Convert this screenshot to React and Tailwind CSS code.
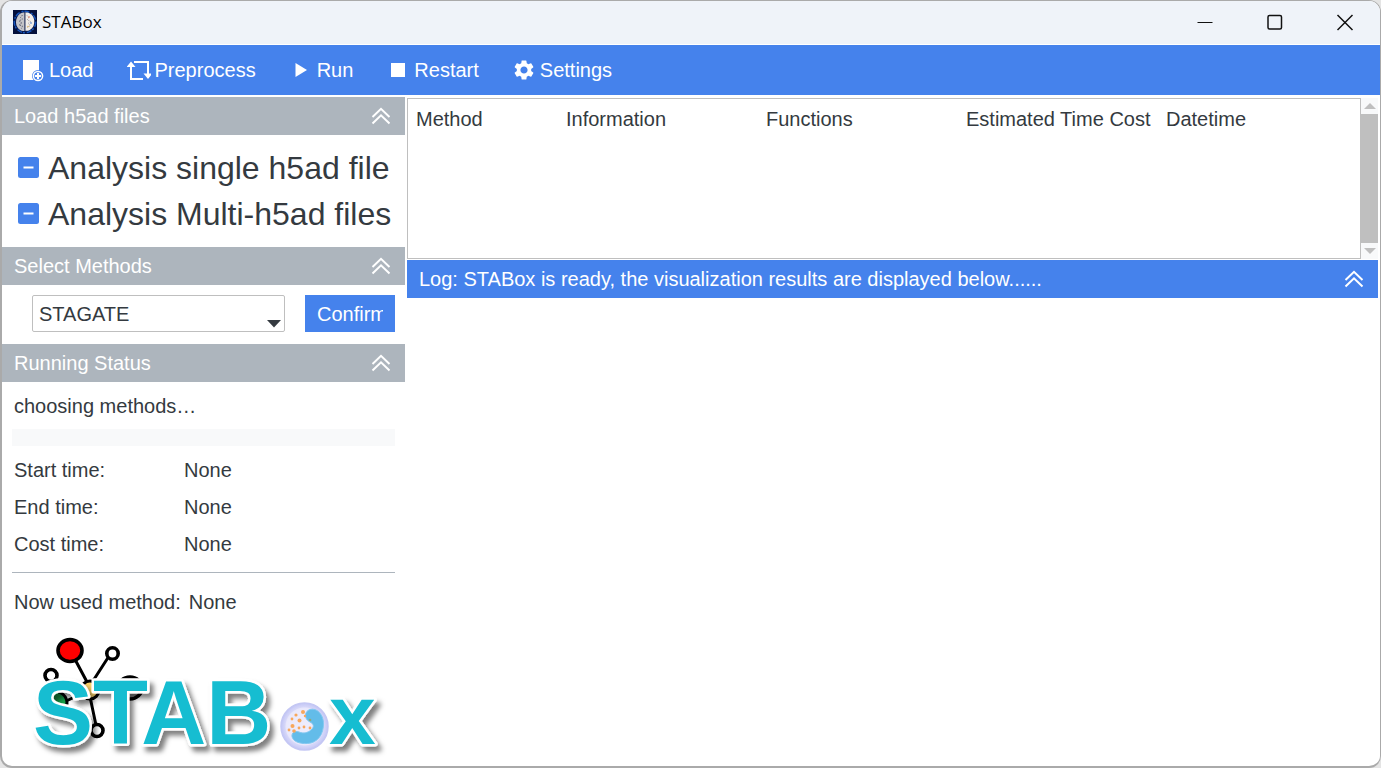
import { useState } from "react";
import { MdSettings } from "react-icons/md";

function AppIcon() {
  return (
    <svg className="size-6" viewBox="0 0 24 24" aria-hidden="true">
      <rect width="24" height="24" fill="#04103c" />
      <circle cx="12" cy="12" r="10.8" fill="#071a52" stroke="#1656bf" strokeWidth="1.400" strokeDasharray="5 2 2 1" />
      <path d="M11.500 2.600C8 2 5.400 4.600 4.200 7.200 2.400 10.400 2.600 14.800 4.600 17.400c1.600 2.600 4.400 4.200 6.900 3.400z" fill="#c4c4c8" />
      <path d="M12.300 2.600c3.700-.8 7.100 1.800 8.300 5.200 1.400 3.600.8 7.800-1.600 10.400-1.900 2-4.500 3-6.700 2.400z" fill="#f1ede9" />
      <path d="M9.500 5l-2 2.500 2 1.500-3.500 2 3 2-3 2 3.500 1-1 2.500" fill="none" stroke="#66677a" strokeWidth="1" strokeDasharray="1.500 1" />
      <path d="M14 5.500l2 2.500-2 2 4 1.500-3 2 2.500 2-3 2" fill="none" stroke="#8c8794" strokeWidth=".9" strokeDasharray="1 1.500" />
      <path d="M11.900 3v17" stroke="#4a5070" strokeWidth=".7" />
      <circle cx="16" cy="7" r=".8" fill="#df6c4a" />
      <circle cx="18" cy="13" r=".8" fill="#3b74c9" />
      <circle cx="15" cy="16.500" r=".7" fill="#d7a23f" />
    </svg>
  );
}

function LoadIcon() {
  return (
    <svg className="size-6" viewBox="0 0 24 24" aria-hidden="true">
      <path d="M2 2h16v20H2z" fill="#fff" />
      <circle cx="17" cy="18" r="6" fill="#4582ec" />
      <circle cx="17" cy="18" r="4.600" fill="#4582ec" stroke="#fff" strokeWidth="1.500" />
      <path d="M17 15v6M14 18h6" stroke="#fff" strokeWidth="2" />
    </svg>
  );
}

function PreprocessIcon() {
  return (
    <svg className="size-6" viewBox="0 0 24 24" aria-hidden="true">
      <path d="M4 6v15h12M7 4h14v14" fill="none" stroke="#fff" strokeWidth="2" />
      <path d="M-.5 9L4 3.500 8.500 9zM16.500 15.500L21 21l4.500-5.500z" fill="#fff" />
    </svg>
  );
}

function RunIcon() {
  return (
    <svg className="size-6" viewBox="0 0 24 24" aria-hidden="true">
      <path d="M6.500 5v14L18 12z" fill="#fff" />
    </svg>
  );
}

function StopIcon() {
  return (
    <svg className="size-6" viewBox="0 0 24 24" aria-hidden="true">
      <path d="M5 5h14v14H5z" fill="#fff" />
    </svg>
  );
}

function Chevrons({ flipped }) {
  return (
    <svg className={flipped ? "size-5 rotate-180" : "size-5"} viewBox="0 0 20 20" fill="none" stroke="#fff" strokeWidth="2" aria-hidden="true">
      <path d="M1.500 11L10 2.800l8.500 8.200M1.500 17.500L10 9.300l8.500 8.200" />
    </svg>
  );
}

function PanelHeader({ title, tone, open, onToggle }) {
  return (
    <div className={`flex h-[38px] items-center justify-between pl-3 pr-3.5 text-white ${tone}`}>
      <h2>{title}</h2>
      <button type="button" aria-label={`Toggle ${title}`} aria-expanded={open} onClick={onToggle}>
        <Chevrons flipped={!open} />
      </button>
    </div>
  );
}

function Panel({ title, tone = "bg-[#adb5bd]", children }) {
  const [open, setOpen] = useState(true);
  return (
    <section>
      <PanelHeader title={title} tone={tone} open={open} onToggle={() => setOpen(!open)} />
      {open && children}
    </section>
  );
}

function TreeItem({ label }) {
  return (
    <li>
      <button type="button" className="flex h-[46px] items-center gap-2 text-[32px] whitespace-nowrap">
        <svg className="size-[22px]" viewBox="0 0 22 22" aria-hidden="true">
          <rect width="21" height="21" rx="2.500" fill="#4582ec" />
          <path d="M5.500 10.500h10" stroke="#fff" strokeWidth="1.800" />
        </svg>
        {label}
      </button>
    </li>
  );
}

function Logo() {
  return (
    <svg className="h-[132px] w-[380px]" viewBox="0 0 380 132" role="img" aria-label="STABox">
      <defs>
        <filter id="shade" x="-10%" y="-10%" width="120%" height="130%">
          <feDropShadow dx="4" dy="5" stdDeviation="2.500" floodColor="#000" floodOpacity=".5" />
        </filter>
        <radialGradient id="cell">
          <stop offset="0" stopColor="#eceafc" />
          <stop offset=".72" stopColor="#e2e2fb" />
          <stop offset="1" stopColor="#c3c6f5" />
        </radialGradient>
      </defs>
      <g stroke="#000" strokeWidth="3" fill="#fff">
        <path d="M58 20L75 52M99 23L79 54M77 62L85 100M77 60L48 74" />
        <ellipse cx="58" cy="20.500" rx="12" ry="11" fill="#f00" strokeWidth="3.600" />
        <circle cx="100.500" cy="23.500" r="5.700" strokeWidth="3.600" />
        <circle cx="39" cy="45.500" r="6" strokeWidth="3.600" />
        <circle cx="85" cy="100.500" r="6" strokeWidth="3.600" />
        <ellipse cx="118" cy="58" rx="12" ry="11" fill="#999" strokeWidth="3.600" />
        <ellipse cx="42" cy="73" rx="13" ry="12" fill="#16a34a" />
        <circle cx="78" cy="60" r="9" fill="#fcd36c" />
      </g>
      <g fontFamily="'Liberation Sans', Arial, sans-serif" fontWeight="700" fill="#17bdd1" stroke="#fff" strokeWidth="5" strokeLinejoin="round" paintOrder="stroke" filter="url(#shade)">
        <text x="21" y="114" fontSize="90">STAB</text>
        <text x="317" y="114" fontSize="84">x</text>
      </g>
      <circle cx="292.500" cy="96.500" r="23.500" fill="url(#cell)" stroke="#c4c7f4" strokeWidth="1.500" />
      <circle cx="292.500" cy="96.500" r="19" fill="#f0effd" opacity=".6" />
      <path d="M298 79.500c7-2 13 5 13.500 13 .5 12-6 20.500-16 21-8 .5-14.500-2-15.500-7-.5-4 3-6 7-4.500 5 2 9 .5 12-2 3.500-3 3-6-1-8-3-1.500-4.500-3.500-4.500-6.500 0-3 1.500-5 4.500-6z" fill="#63bce9" stroke="#83c8f1" strokeWidth="1" />
      <g fill="#f8a75c">
        <circle cx="291" cy="82" r="2" />
        <circle cx="284" cy="85" r="1.600" />
        <circle cx="280" cy="89" r="1.400" />
        <circle cx="287.500" cy="90.500" r="2" />
        <circle cx="293" cy="86" r="1.200" />
        <circle cx="280.500" cy="96" r="2" />
        <circle cx="287" cy="98" r="1.400" />
        <circle cx="292" cy="97" r="1.400" />
        <circle cx="298" cy="98" r="1.400" />
        <circle cx="277" cy="100" r="1.400" />
        <circle cx="282" cy="101" r="1.800" />
        <circle cx="298" cy="90" r="1.300" fill="#91a77c" />
      </g>
    </svg>
  );
}

const tools = [
  { label: "Load", icon: <LoadIcon /> },
  { label: "Preprocess", icon: <PreprocessIcon /> },
  { label: "Run", icon: <RunIcon /> },
  { label: "Restart", icon: <StopIcon /> },
  { label: "Settings", icon: <MdSettings className="size-6" /> },
];

const times = ["Start time:", "End time:", "Cost time:"];

export default function App() {
  return (
    <div className="min-h-screen bg-[#e4e4e4]">
      <div className="flex min-h-screen flex-col overflow-hidden rounded-xl border border-l-2 border-b-2 border-[#aaa] bg-white font-['Liberation_Sans',Arial,sans-serif] text-xl text-[#343a40]">
        <header className="flex h-[43px] shrink-0 items-center justify-between bg-[#eff3f9] pb-0.5 pl-[11px] pr-[25px]">
          <div className="flex items-center gap-[5px]">
            <AppIcon />
            <h1 className="font-['Open_Sans','Noto_Sans',sans-serif] text-[17px] text-black">STABox</h1>
          </div>
          <div className="flex items-center gap-[50px]">
            <button type="button" aria-label="Minimize">
              <svg className="size-5" viewBox="0 0 20 20" stroke="#111" strokeWidth="1.200"><path d="M2.500 10.500h15" /></svg>
            </button>
            <button type="button" aria-label="Maximize">
              <svg className="size-5" viewBox="0 0 20 20" fill="none" stroke="#111" strokeWidth="1.500"><rect x="3" y="3.500" width="13.500" height="13.500" rx="1.500" /></svg>
            </button>
            <button type="button" aria-label="Close">
              <svg className="size-5" viewBox="0 0 20 20" stroke="#111" strokeWidth="1.500"><path d="M2.500 3l15 15M17.500 3l-15 15" /></svg>
            </button>
          </div>
        </header>

        <nav className="mt-px flex h-[50px] shrink-0 items-center gap-[33px] bg-[#4582ec] pl-[19px] text-white">
          {tools.map((tool) => (
            <button key={tool.label} type="button" className="flex items-center gap-1">
              {tool.icon}
              {tool.label}
            </button>
          ))}
        </nav>

        <div className="flex grow gap-0.5 pt-0.5 pr-0.5">
          <aside className="w-[403px] shrink-0">
            <Panel title="Load h5ad files">
              <ul className="px-4 py-2.5">
                <TreeItem label="Analysis single h5ad file" />
                <TreeItem label="Analysis Multi-h5ad files" />
              </ul>
            </Panel>

            <Panel title="Select Methods">
              <div className="flex gap-5 pt-2.5 pr-2.5 pb-3 pl-[30px]">
                <div className="relative grow">
                  <select aria-label="Method" className="h-[37px] w-full appearance-none rounded-xs border border-[#bfbfbf] bg-white px-1.5">
                    <option>STAGATE</option>
                  </select>
                  <svg className="pointer-events-none absolute right-1 bottom-1 h-2 w-3.5" viewBox="0 0 14 8" aria-hidden="true">
                    <path d="M0 0h14L7 7.500z" fill="#343a40" />
                  </svg>
                </div>
                <button type="button" className="flex h-[37px] w-[90px] items-center bg-[#4582ec] px-3 text-white">
                  <span className="overflow-hidden">Confirm</span>
                </button>
              </div>
            </Panel>

            <Panel title="Running Status">
              <div className="px-2.5 pt-2.5">
                <p className="px-0.5">choosing methods…</p>
                <div role="progressbar" aria-label="Progress" aria-valuenow={0} className="mt-[9px] mb-1.5 h-[17px] bg-[#f8f9fa]" />
                <dl className="grid grid-cols-[170px_1fr] px-0.5 leading-[37px]">
                  {times.map((label) => (
                    <div key={label} className="contents">
                      <dt>{label}</dt>
                      <dd>None</dd>
                    </div>
                  ))}
                </dl>
                <hr className="mt-[9px] border-[#adb5bd]" />
                <p className="mt-[15px] flex gap-2 px-0.5"><span>Now used method:</span><span>None</span></p>
              </div>
              <div className="mt-3.5 pl-2.5">
                <Logo />
              </div>
            </Panel>
          </aside>

          <main className="min-w-0 grow">
            <div className="mt-px mb-px flex h-[161px]">
              <div className="min-w-0 grow overflow-hidden border border-[#bfbfbf]">
                <table className="w-full table-fixed">
                  <thead>
                    <tr className="h-10 text-left whitespace-nowrap">
                      <th className="w-[150px] pl-2 font-normal">Method</th>
                      <th className="w-[200px] pl-2 font-normal">Information</th>
                      <th className="w-[200px] pl-2 font-normal">Functions</th>
                      <th className="w-[200px] pl-2 font-normal">Estimated Time Cost</th>
                      <th className="pl-2 font-normal">Datetime</th>
                    </tr>
                  </thead>
                  <tbody />
                </table>
              </div>
              <div className="flex w-[17px] shrink-0 flex-col bg-[#f8f9fa]">
                <button type="button" aria-label="Scroll up" className="flex h-4 items-center justify-center">
                  <svg className="h-1.5 w-3" viewBox="0 0 12 6"><path d="M0 6l6-6 6 6z" fill="#bfbfbf" /></svg>
                </button>
                <div className="grow bg-[#bfbfbf]" />
                <button type="button" aria-label="Scroll down" className="flex h-4 items-center justify-center">
                  <svg className="h-1.5 w-3" viewBox="0 0 12 6"><path d="M0 0l6 6 6-6z" fill="#bfbfbf" /></svg>
                </button>
              </div>
            </div>
            <Panel title="Log: STABox is ready, the visualization results are displayed below......" tone="bg-[#4582ec]" />
          </main>
        </div>
      </div>
    </div>
  );
}
